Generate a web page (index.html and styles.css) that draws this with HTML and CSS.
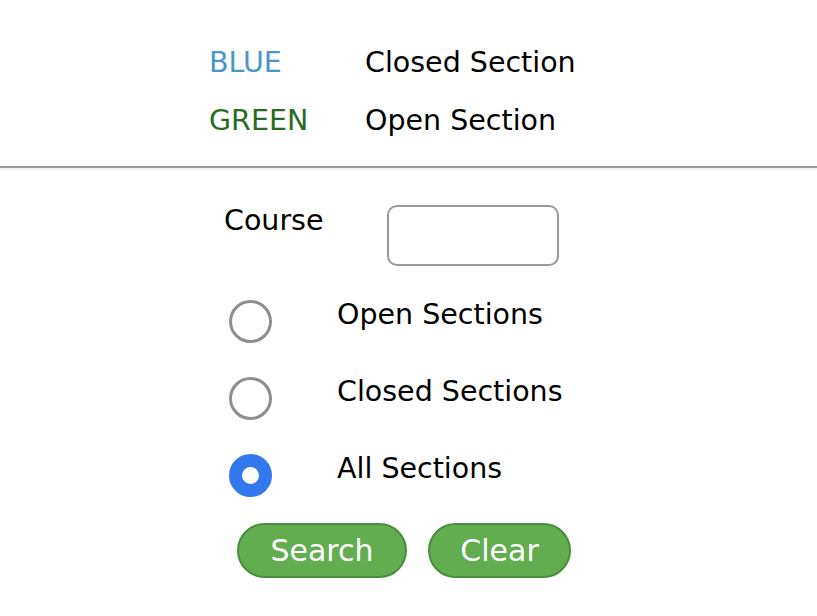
FILE: index.html
```html
<!DOCTYPE html>
<html lang="en">
<head>
  <meta charset="UTF-8" />
  <title>Section Search</title>
  <link rel="stylesheet" href="styles.css">
</head>
<body>
  <div class="legend">
    <div class="legend-row">
      <span class="key blue">BLUE</span>
      <span class="desc">Closed Section</span>
    </div>
    <div class="legend-row">
      <span class="key green">GREEN</span>
      <span class="desc">Open Section</span>
    </div>
  </div>
  <hr class="rule">
  <form class="search">
    <div class="course-row">
      <label for="course">Course</label>
      <input type="text" id="course" name="course">
    </div>
    <label class="opt"><span class="radio"></span><span class="opt-text">Open Sections</span></label>
    <label class="opt"><span class="radio"></span><span class="opt-text">Closed Sections</span></label>
    <label class="opt"><span class="radio on"></span><span class="opt-text">All Sections</span></label>
    <div class="buttons">
      <button type="button" class="btn search-btn">Search</button>
      <button type="button" class="btn clear-btn">Clear</button>
    </div>
  </form>
</body>
</html>
```

FILE: styles.css
```css
* { box-sizing: border-box; }
body { margin: 0; font-family: 'DejaVu Sans', sans-serif; font-size: 28.5px; color: #000; background: #fff; }
.legend { padding: 33px 0 0 209px; }
.legend-row { display: flex; height: 58px; align-items: center; }
.key { width: 156px; }
.blue { color: #4a98c8; }
.green { color: #2b6a22; }
.rule { margin: 17px 0 0; border: none; height: 2px; background: #9a9a9a; box-shadow: 0 2px 2px rgba(0,0,0,0.08); }
.search { padding: 37px 0 0 224px; }
.course-row { display: flex; align-items: flex-start; }
.course-row label { width: 163px; line-height: 32px; }
.course-row input { width: 172px; height: 61px; border: 2px solid #999; border-radius: 10px; margin: 0; font-size: 28px; }
.opt { display: flex; align-items: center; height: 77px; }
.course-row + .opt { margin-top: 17px; }
.radio { width: 43px; height: 43px; border: 3px solid #8e8e8e; border-radius: 50%; margin-left: 5px; }
.radio.on { border: 13px solid #3478f0; }
.opt-text { margin-left: 65px; line-height: 32px; padding-bottom: 14px; }
.buttons { display: flex; gap: 21px; margin: 9px 0 0 13px; }
.btn { height: 55px; border: 2px solid #4b8d3e; border-radius: 28px; background: #62ad4f; color: #fff; font-family: 'DejaVu Sans', Verdana, sans-serif; font-size: 30px; padding: 0; }
.search-btn { width: 170px; }
.clear-btn { width: 143px; }
```
